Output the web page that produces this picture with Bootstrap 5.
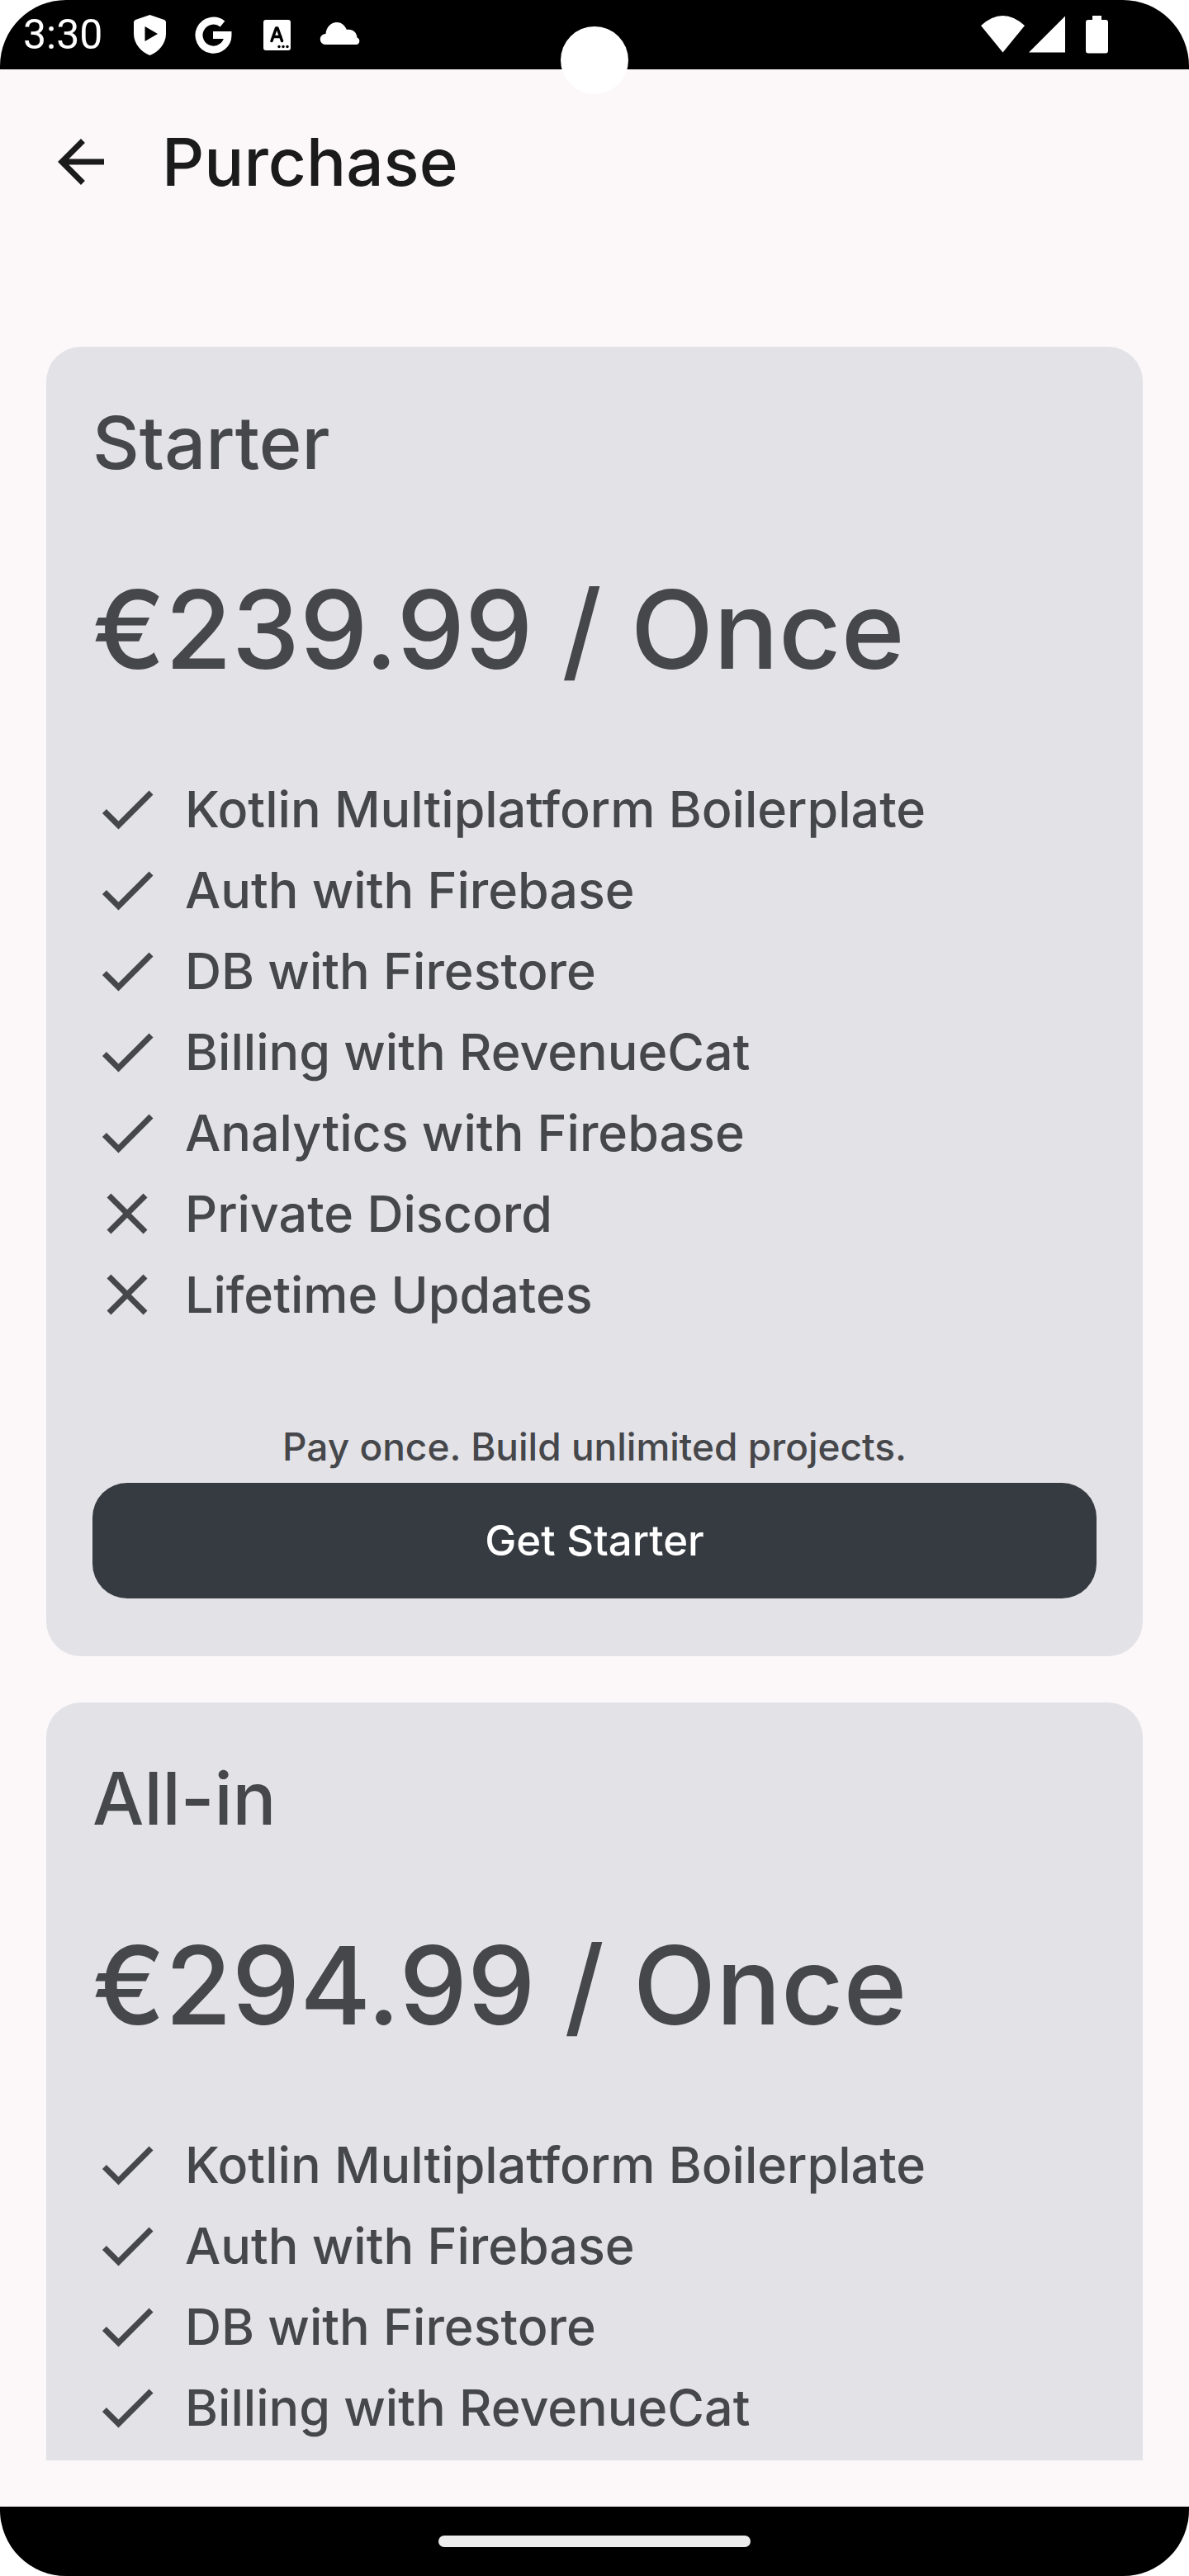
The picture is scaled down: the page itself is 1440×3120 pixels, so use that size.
<!DOCTYPE html>
<html lang="en">
<head>
<meta charset="utf-8">
<meta name="viewport" content="width=device-width, initial-scale=1">
<title>Purchase</title>
<link href="https://cdn.jsdelivr.net/npm/bootstrap@5.3.0/dist/css/bootstrap.min.css" rel="stylesheet">
<style>
  body { background: #fff; font-family: Inter, "Open Sans", sans-serif; font-weight: 500; color: #46474b; }
  .screen { height: 100vh; background: #fcf8f9; border-radius: 80px; }
  .status-bar { height: 84px; background: #000; color: #fff; padding: 0 98px 0 28px; }
  .status-time { width: 115px; font-family: Roboto, sans-serif; font-weight: 400; font-size: 50px; line-height: 84px; }
  .camera { width: 82px; height: 82px; top: 32px; background: #fff; }
  .top-bar { height: 224px; padding: 0 56px; gap: 56px; color: #1b1b1c; }
  .top-title { font-size: 80px; line-height: 112px; font-weight: 500; }
  .plans { padding: 112px 56px 56px; gap: 56px; }
  .plan { --bs-card-bg: #e2e2e7; --bs-card-color: #46474b; --bs-card-border-radius: 42px; --bs-card-inner-border-radius: 42px; --bs-card-border-width: 0; }
  .plan-body { padding: 56px 56px 70px; }
  .plan-name { font-size: 88px; line-height: 120px; font-weight: 500; margin-bottom: 90px; }
  .plan-price { font-size: 131px; line-height: 154px; margin-bottom: 98px; }
  .features { gap: 14px; }
  .features li { gap: 28px; font-size: 61px; line-height: 84px; }
  .plan-note { margin: 112px 0 14px; font-size: 46px; line-height: 60px; }
  .btn-plan { --bs-btn-bg: #363a41; --bs-btn-color: #fff; --bs-btn-hover-bg: #44494f; --bs-btn-hover-color: #fff; --bs-btn-border-width: 0; --bs-btn-border-radius: 42px; --bs-btn-font-size: 51px; --bs-btn-font-weight: 500; --bs-btn-padding-y: 35px; --bs-btn-line-height: 70px; }
  .nav-strip { height: 84px; background: #000; }
  .home-pill { width: 378px; height: 14px; background: #ececec; }
</style>
</head>
<body>
<svg class="d-none" aria-hidden="true">
  <symbol id="check" viewBox="0 0 24 24"><path d="M9 16.17 4.83 12l-1.42 1.41L9 19 21 7l-1.41-1.41z"/></symbol>
  <symbol id="cross" viewBox="0 0 24 24"><path d="M19 6.41 17.59 5 12 10.59 6.41 5 5 6.41 10.59 12 5 17.59 6.41 19 12 13.41 17.59 19 19 17.59 13.41 12z"/></symbol>
</svg>
<div class="screen d-flex flex-column overflow-hidden position-relative">
  <header class="status-bar d-flex align-items-center flex-shrink-0">
    <span class="status-time">3:30</span>
    <svg width="77" height="84" fill="#fff" aria-hidden="true"><path fill-rule="evenodd" d="M38.500 18 56 24Q58 25 58 27V41C58 53 49 63 38.500 67 28 63 19 53 19 41V27Q19 25 21 24ZM32.500 32V50L48 41Z"/></svg>
    <svg width="77" height="84" fill="none" stroke="#fff" stroke-width="9" aria-hidden="true"><path d="M49.500 29A17.500 17.500 0 1 0 56 42.500H38"/></svg>
    <svg width="77" height="84" aria-hidden="true"><rect x="22" y="24" width="33" height="37" rx="3" fill="#fff"/><path d="M32 49.500 37.500 34H39L44.500 49.500M34 44.500H43" fill="none" stroke="#000" stroke-width="3.500" stroke-linecap="round" stroke-linejoin="round"/><g fill="#000"><circle cx="41" cy="56.500" r="1.700"/><circle cx="46" cy="56.500" r="1.700"/><circle cx="51" cy="56.500" r="1.700"/></g></svg>
    <svg width="77" height="84" fill="#fff" aria-hidden="true"><path d="M20 54A6.500 6.500 0 0 1 20.500 41C21 33 27 27 34 27C39 27 43 30 46 36C53 35 58 39 58.500 45.500A4.500 4.500 0 0 1 58 54Z"/></svg>
    <svg class="ms-auto" width="154" height="84" fill="#fff" aria-hidden="true"><path d="M0 31Q26.500 7 53 31L26.500 63.500Z"/><path d="M58 63.500H102V19.500Z"/><path d="M135 19H146V24H151Q154 24 154 27V61.500Q154 64.500 151 64.500H130Q127 64.500 127 61.500V27Q127 24 130 24H135Z"/></svg>
  </header>
  <span class="camera position-absolute start-50 translate-middle-x rounded-circle"></span>
  <div class="top-bar d-flex align-items-center flex-shrink-0">
    <a href="#" class="d-flex text-reset" aria-label="Back"><svg width="84" height="84" viewBox="0 0 24 24" fill="currentColor" aria-hidden="true"><path d="M20 11H7.830l5.590-5.590L12 4l-8 8 8 8 1.410-1.410L7.830 13H20z"/></svg></a>
    <h1 class="top-title m-0">Purchase</h1>
  </div>
  <main class="plans d-flex flex-column flex-grow-1">
    <section class="plan card">
      <div class="plan-body">
        <h2 class="plan-name">Starter</h2>
        <div class="plan-price">€239.99 / Once</div>
        <ul class="features list-unstyled d-flex flex-column m-0">
          <li class="d-flex"><svg width="84" height="84" fill="currentColor" aria-hidden="true"><use href="#check"/></svg><span>Kotlin Multiplatform Boilerplate</span></li>
          <li class="d-flex"><svg width="84" height="84" fill="currentColor" aria-hidden="true"><use href="#check"/></svg><span>Auth with Firebase</span></li>
          <li class="d-flex"><svg width="84" height="84" fill="currentColor" aria-hidden="true"><use href="#check"/></svg><span>DB with Firestore</span></li>
          <li class="d-flex"><svg width="84" height="84" fill="currentColor" aria-hidden="true"><use href="#check"/></svg><span>Billing with RevenueCat</span></li>
          <li class="d-flex"><svg width="84" height="84" fill="currentColor" aria-hidden="true"><use href="#check"/></svg><span>Analytics with Firebase</span></li>
          <li class="d-flex"><svg width="84" height="84" fill="currentColor" aria-hidden="true"><use href="#cross"/></svg><span>Private Discord</span></li>
          <li class="d-flex"><svg width="84" height="84" fill="currentColor" aria-hidden="true"><use href="#cross"/></svg><span>Lifetime Updates</span></li>
        </ul>
        <p class="plan-note text-center">Pay once. Build unlimited projects.</p>
        <button type="button" class="btn btn-plan w-100">Get Starter</button>
      </div>
    </section>
    <section class="plan card rounded-bottom-0 flex-grow-1">
      <div class="plan-body pb-0">
        <h2 class="plan-name">All-in</h2>
        <div class="plan-price">€294.99 / Once</div>
        <ul class="features list-unstyled d-flex flex-column m-0">
          <li class="d-flex"><svg width="84" height="84" fill="currentColor" aria-hidden="true"><use href="#check"/></svg><span>Kotlin Multiplatform Boilerplate</span></li>
          <li class="d-flex"><svg width="84" height="84" fill="currentColor" aria-hidden="true"><use href="#check"/></svg><span>Auth with Firebase</span></li>
          <li class="d-flex"><svg width="84" height="84" fill="currentColor" aria-hidden="true"><use href="#check"/></svg><span>DB with Firestore</span></li>
          <li class="d-flex"><svg width="84" height="84" fill="currentColor" aria-hidden="true"><use href="#check"/></svg><span>Billing with RevenueCat</span></li>
        </ul>
      </div>
    </section>
  </main>
  <footer class="nav-strip d-flex align-items-center justify-content-center flex-shrink-0">
    <span class="home-pill rounded-pill"></span>
  </footer>
</div>
<script src="https://cdn.jsdelivr.net/npm/bootstrap@5.3.0/dist/js/bootstrap.bundle.min.js"></script>
</body>
</html>
